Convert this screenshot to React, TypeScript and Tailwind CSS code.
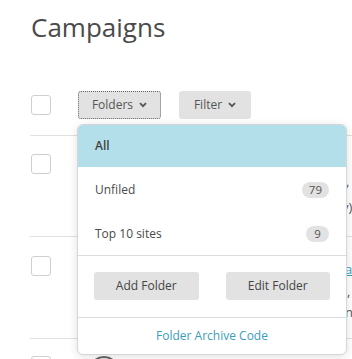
import { useState } from 'react';

function ChevronDown () {
	return (
		<svg width="8"
			height="6"
			viewBox="0 0 8 6"
			className="ml-1.5 mt-px">
			<path d="M1 1.2 L4 4.2 L7 1.2"
				fill="none"
				stroke="#555"
				strokeWidth="1.8" />
		</svg>
	);
}

function Checkbox () {
	return <div className="size-5 shrink-0 rounded-[3px] border border-[#cfcfcf] bg-white" />;
}

const folders = [
	{ name: 'Unfiled', count: 79 },
	{ name: 'Top 10 sites', count: 9 },
];

export default function App () {
	const [active] = useState('All');

	return (
		<div className="h-[359px] w-[352px] overflow-hidden bg-white font-['Open_Sans',sans-serif] text-[#4a4a4a]">
			{/* Title */}
			<h1 className="pl-[31px] pt-[10px] text-[26px] font-normal leading-[34px] text-[#4a4a4a]">
				Campaigns
			</h1>

			{/* Toolbar */}
			<div className="ml-[30px] mt-[30px] flex h-[62px] items-center border-b border-[#e0e0e0]">
				<div className="ml-px">
					<Checkbox />
				</div>
				<div className="relative ml-[27px]">
					<button className="flex h-7 w-[83px] items-center justify-center rounded-[3px] border border-dotted border-[#666] bg-[#e2e2e2] text-[12px] text-[#555]">
						Folders <ChevronDown />
					</button>

					{/* Folder menu */}
					<div className="absolute left-[-1px] top-[33px] z-10 w-[270px] overflow-hidden rounded-md border border-[#d6d6d6] bg-white shadow-[0_2px_10px_rgba(0,0,0,0.12)]">
						<div className={`flex h-[42px] items-center px-[17px] text-[12px] font-semibold text-[#444] ${active === 'All' ? 'bg-[#b3dfeb]' : ''}`}>
							All
						</div>
						{folders.map((f) => (
							<div key={f.name}
								className="flex h-[44px] items-center justify-between px-[17px] pt-[3px] text-[12px] text-[#4a4a4a]">
								<span>{f.name}</span>
								<span className="flex h-4 min-w-[23px] items-center justify-center rounded-full bg-[#e2e2e2] px-[7px] text-[11.5px] text-[#555]">
									{f.count}
								</span>
							</div>
						))}
						<div className="grid grid-cols-2 gap-[27px] border-t border-[#dcdcdc] px-4 pb-[17px] pt-4">
							<button className="h-7 rounded-[3px] bg-[#e2e2e2] text-[12px] text-[#444]">
								Add Folder
							</button>
							<button className="h-7 rounded-[3px] bg-[#e2e2e2] text-[12px] text-[#444]">
								Edit Folder
							</button>
						</div>
						<div className="flex h-[37px] items-center justify-center border-t border-[#dcdcdc] text-[12px] text-[#3a9dbb]">
							Folder Archive Code
						</div>
					</div>
				</div>
				<button className="ml-[18px] flex h-7 w-[72px] items-center justify-center rounded-[3px] bg-[#e2e2e2] text-[12px] text-[#555]">
					Filter <ChevronDown />
				</button>
			</div>

			{/* Campaign rows behind the menu */}
			<div className="ml-[30px] flex h-[101px] border-b border-[#e0e0e0] pt-[18px]">
				<div className="ml-px">
					<Checkbox />
				</div>
				<div className="ml-[37px] flex flex-col gap-[6px] overflow-hidden whitespace-nowrap pt-[18px] text-[13px] text-[#555]">
					<span className="pl-[258px]">,</span>
					<span className="pl-[254px]">y)</span>
				</div>
			</div>
			<div className="ml-[30px] flex h-[102px] border-b border-[#e0e0e0] pt-[19px]">
				<div className="ml-px">
					<Checkbox />
				</div>
				<div className="ml-[37px] flex flex-col gap-[2px] overflow-hidden whitespace-nowrap pt-[4px] text-[13px] text-[#555]">
					<span className="pl-[257px] text-[#3a9dbb] underline">a</span>
					<span className="pl-[259px]">,</span>
					<span className="pl-[257px]">n</span>
				</div>
			</div>
			<div className="ml-[30px] flex pt-[17px]">
				<div className="ml-px">
					<Checkbox />
				</div>
				<div className="ml-[37px] size-8 rounded-full border-2 border-[#666] bg-[#eee]" />
			</div>
		</div>
	);
}
